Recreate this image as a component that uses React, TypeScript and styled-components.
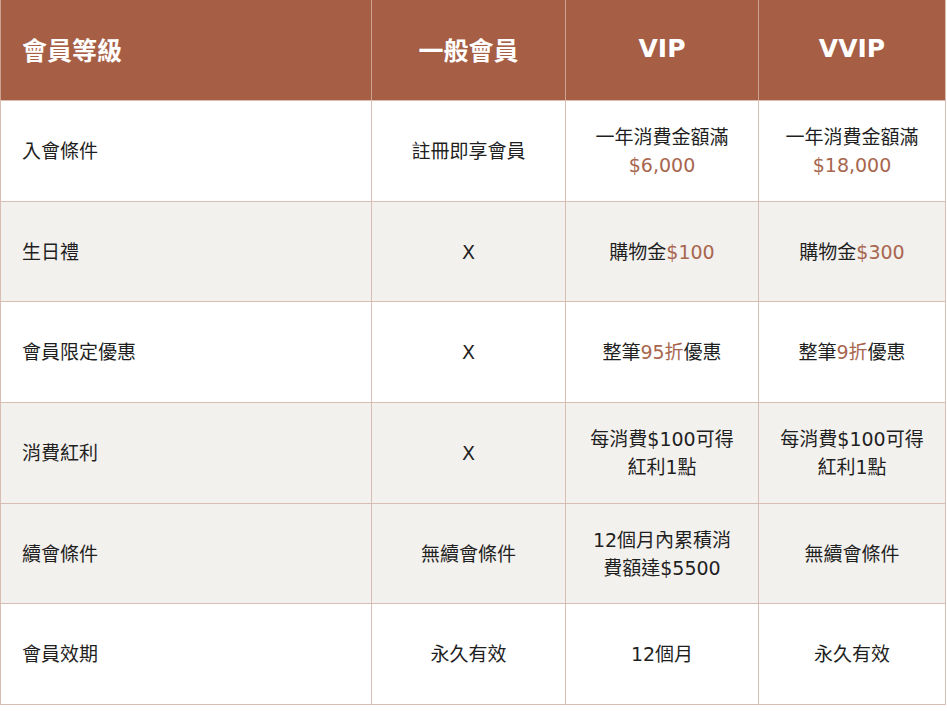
import React from 'react';
import styled, { createGlobalStyle } from 'styled-components';

const GlobalStyle = createGlobalStyle`
  html, body {
    margin: 0;
    padding: 0;
    background: #ffffff;
  }
  body {
    font-family: 'DejaVu Sans', 'Noto Sans CJK TC', sans-serif;
    color: #222222;
  }
`;

type Row = {
  label: string;
  shaded: boolean;
  cells: React.ReactNode[];
};

const Hi: React.FC<{ children: React.ReactNode }> = ({ children }) => (
  <Accent>{children}</Accent>
);

const rows: Row[] = [
  {
    label: '入會條件',
    shaded: false,
    cells: [
      '註冊即享會員',
      <>一年消費金額滿<br /><Hi>$6,000</Hi></>,
      <>一年消費金額滿<br /><Hi>$18,000</Hi></>,
    ],
  },
  {
    label: '生日禮',
    shaded: true,
    cells: ['X', <>購物金<Hi>$100</Hi></>, <>購物金<Hi>$300</Hi></>],
  },
  {
    label: '會員限定優惠',
    shaded: false,
    cells: ['X', <>整筆<Hi>95折</Hi>優惠</>, <>整筆<Hi>9折</Hi>優惠</>],
  },
  {
    label: '消費紅利',
    shaded: true,
    cells: [
      'X',
      <>每消費$100可得<br />紅利1點</>,
      <>每消費$100可得<br />紅利1點</>,
    ],
  },
  {
    label: '續會條件',
    shaded: true,
    cells: ['無續會條件', <>12個月內累積消<br />費額達$5500</>, '無續會條件'],
  },
  {
    label: '會員效期',
    shaded: false,
    cells: ['永久有效', '12個月', '永久有效'],
  },
];

const App: React.FC = () => (
  <>
    <GlobalStyle />
    <Table>
      <colgroup>
        <col style={{ width: 371 }} />
        <col style={{ width: 194 }} />
        <col style={{ width: 193 }} />
        <col />
      </colgroup>
      <thead>
        <tr>
          <HeadCell $first>會員等級</HeadCell>
          <HeadCell>一般會員</HeadCell>
          <HeadCell>VIP</HeadCell>
          <HeadCell>VVIP</HeadCell>
        </tr>
      </thead>
      <tbody>
        {rows.map((row) => (
          <BodyRow key={row.label} $shaded={row.shaded}>
            <Cell $first>{row.label}</Cell>
            {row.cells.map((c, j) => (
              <Cell key={j}>{c}</Cell>
            ))}
          </BodyRow>
        ))}
      </tbody>
    </Table>
  </>
);
export default App;

const Table = styled.table`
  width: 946px;
  border-collapse: collapse;
  table-layout: fixed;
  border: 1px solid #d8bdb2;
  border-top: none;
`;

const HeadCell = styled.th<{ $first?: boolean }>`
  height: 97px;
  padding: 0 ${(p) => (p.$first ? '21px' : '0')} 3px;
  background: #a65e45;
  color: #ffffff;
  font-size: 25px;
  font-weight: 700;
  text-align: ${(p) => (p.$first ? 'left' : 'center')};
  border-left: 1px solid #cfa393;
  border-bottom: 1px solid #d8bdb2;
`;

const BodyRow = styled.tr<{ $shaded: boolean }>`
  background: ${(p) => (p.$shaded ? '#f3f1ee' : '#ffffff')};
`;

const Cell = styled.td<{ $first?: boolean }>`
  height: 99.7px;
  padding: 0 ${(p) => (p.$first ? '21px' : '0')};
  font-size: 19px;
  line-height: 28px;
  color: #1f1f1f;
  text-align: ${(p) => (p.$first ? 'left' : 'center')};
  border: 1px solid #d8bdb2;
`;

const Accent = styled.span`
  color: #a8664e;
`;
